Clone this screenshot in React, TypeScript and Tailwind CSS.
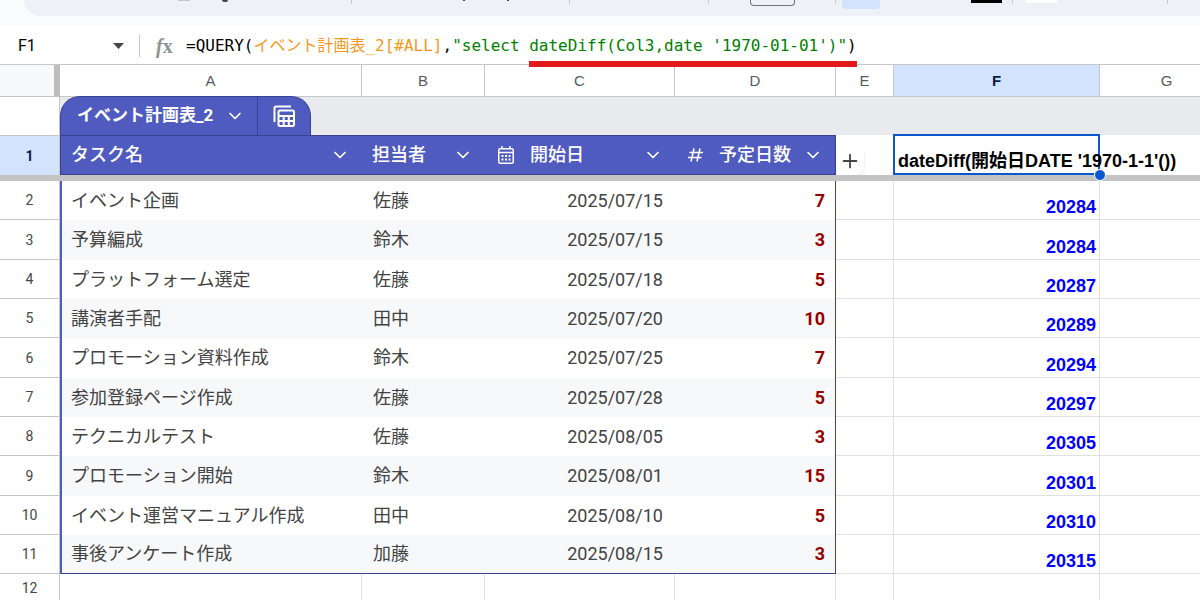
import { ChevronDown, Plus } from "lucide-react";

const tasks = [
  { name: "イベント企画", owner: "佐藤", start: "2025/07/15", days: 7, diff: 20284 },
  { name: "予算編成", owner: "鈴木", start: "2025/07/15", days: 3, diff: 20284 },
  { name: "プラットフォーム選定", owner: "佐藤", start: "2025/07/18", days: 5, diff: 20287 },
  { name: "講演者手配", owner: "田中", start: "2025/07/20", days: 10, diff: 20289 },
  { name: "プロモーション資料作成", owner: "鈴木", start: "2025/07/25", days: 7, diff: 20294 },
  { name: "参加登録ページ作成", owner: "佐藤", start: "2025/07/28", days: 5, diff: 20297 },
  { name: "テクニカルテスト", owner: "佐藤", start: "2025/08/05", days: 3, diff: 20305 },
  { name: "プロモーション開始", owner: "鈴木", start: "2025/08/01", days: 15, diff: 20301 },
  { name: "イベント運営マニュアル作成", owner: "田中", start: "2025/08/10", days: 5, diff: 20310 },
  { name: "事後アンケート作成", owner: "加藤", start: "2025/08/15", days: 3, diff: 20315 },
];

const columns = ["A", "B", "C", "D", "E", "F", "G"];

const grid = "border-r border-b border-[#e1e1e1]";
const rowHead =
  "border-r border-b border-[#c7c7c7] p-0 text-center font-['Roboto'] text-sm font-normal text-[#444746]";
const tableHead =
  "border-y border-[#3a4294] bg-[#505bbf] p-0 text-left font-medium whitespace-nowrap text-white";

function Divider() {
  return <div className="h-1 w-px shrink-0 bg-[#c4c7c5]" />;
}

function Toolbar() {
  return (
    <div className="bg-[#f9fbfd] pb-[10px]">
      <div className="ml-6 flex h-4 items-start overflow-hidden rounded-bl-3xl bg-[#eef2f8]">
        <div className="ml-[154px] h-px w-3 shrink-0 bg-[#c4c7c5]" />
        <div className="ml-8 h-[2px] w-[6px] shrink-0 rounded-b-sm bg-[#444746]" />
        <div className="w-[123px] shrink-0" />
        <Divider />
        <div className="ml-[111px] h-px w-[2px] shrink-0 bg-[#444746]" />
        <div className="ml-[42px] h-px w-[2px] shrink-0 bg-[#444746]" />
        <div className="w-[60px] shrink-0" />
        <Divider />
        <div className="w-[138px] shrink-0" />
        <Divider />
        <div className="ml-[41px] h-[6px] w-[45px] shrink-0 rounded-b border-x border-b border-[#747775]" />
        <div className="w-10 shrink-0" />
        <Divider />
        <div className="ml-[6px] h-[9px] w-[38px] shrink-0 rounded-b bg-[#d3e3fd]" />
        <div className="ml-[91px] h-[3px] w-[31px] shrink-0 bg-black" />
        <div className="w-[10px] shrink-0" />
        <Divider />
        <div className="ml-3 h-[3px] w-8 shrink-0 bg-white" />
        <div className="w-[110px] shrink-0" />
        <Divider />
      </div>
    </div>
  );
}

function FormulaBar() {
  return (
    <div className="flex h-[39px] items-center border-b border-[#c7c7c7] bg-white pt-0.5">
      <input
        aria-label="Name box"
        defaultValue="F1"
        className="w-[109px] pl-[18px] font-['Roboto'] text-base text-black outline-none"
      />
      <button aria-label="Named ranges" className="flex w-[30px] items-center pl-1">
        <svg width="11" height="6" viewBox="0 0 11 6" fill="#444746">
          <path d="M0 0h11L5.500 6z" />
        </svg>
      </button>
      <div className="h-[22px] w-px bg-[#c7c7c7]" />
      <span className="w-[46px] pl-4 font-['Liberation_Serif'] text-xl leading-6 font-bold text-[#8f9293]">
        <i>f</i>x
      </span>
      <div
        role="textbox"
        aria-label="Formula"
        className="font-['DejaVu_Sans_Mono','Noto_Sans_CJK_JP',monospace] text-base leading-6 whitespace-pre text-black"
      >
        =QUERY(<span className="text-[#f7981d]">イベント計画表_2[#ALL]</span>,
        <span className="text-[#008000]">"select </span>
        <span className="relative">
          <span className="text-[#008000]">dateDiff(Col3,date '1970-01-01')"</span>)
          <span className="absolute inset-x-0 top-full mt-1.5 h-[6px] bg-[#e31b1b]" />
        </span>
      </div>
    </div>
  );
}

function TableTab() {
  return (
    <div className="relative -mt-px flex h-[39px] w-[251px] rounded-t-[20px] border-x border-t border-[#3a4294] bg-[#505bbf] text-white">
      <button className="flex flex-1 items-center justify-between pr-3 pl-4 text-[17px] font-bold">
        イベント計画表_2
        <ChevronDown size={20} />
      </button>
      <button aria-label="Table views" className="flex w-[53px] items-center justify-center border-l border-[#3a4294]">
        <svg width="22" height="22" viewBox="0 0 22 22" fill="none" stroke="currentColor" strokeWidth="2">
          <path d="M1.500 17V3a1.500 1.500 0 0 1 1.500-1.500h15" />
          <rect x="5.500" y="5.500" width="15.500" height="15.500" rx="1.500" />
          <path d="M5.500 11h15.500M5.500 16h15.500M10.700 11v10M15.800 11v10" />
        </svg>
      </button>
    </div>
  );
}

function CalendarIcon() {
  return (
    <svg width="16" height="18" viewBox="0 0 16 18" className="shrink-0">
      <rect x="0.750" y="2.750" width="14.500" height="14.500" rx="1.500" fill="none" stroke="currentColor" strokeWidth="1.500" />
      <path d="M4 0v3M12 0v3M1 6.500h14" stroke="currentColor" strokeWidth="1.500" />
      <path d="M3.500 10h2M7 10h2M10.500 10h2M3.500 13.500h2M7 13.500h2M10.500 13.500h2" stroke="currentColor" strokeWidth="2" />
    </svg>
  );
}

function NumberIcon() {
  return (
    <svg width="15" height="14" viewBox="0 0 15 14" fill="none" stroke="currentColor" strokeWidth="1.600" className="shrink-0">
      <path d="M1.500 4.500H15M0 9.500h13.500M6 0.500 3 13.500M12 0.500 9 13.500" />
    </svg>
  );
}

function MenuButton({ label }: { label: string }) {
  return (
    <button aria-label={label} className="ml-auto">
      <ChevronDown size={20} />
    </button>
  );
}

export default function App() {
  return (
    <div className="h-screen overflow-hidden bg-white font-['Roboto','Noto_Sans_CJK_JP',sans-serif]">
      <Toolbar />
      <FormulaBar />
      <table className="w-full min-w-[1234px] table-fixed border-separate border-spacing-0">
        <colgroup>
          <col className="w-[60px]" />
          <col className="w-[302px]" />
          <col className="w-[123px]" />
          <col className="w-[190px]" />
          <col className="w-[161px]" />
          <col className="w-[58px]" />
          <col className="w-[206px]" />
          <col />
        </colgroup>
        <thead>
          <tr className="h-8">
            <th className="border-r-[6px] border-b border-r-[#bdbdbd] border-b-[#c7c7c7] bg-[#f8f9fa] p-0" />
            {columns.map((col) => (
              <th
                key={col}
                className={`border-r border-b border-[#c7c7c7] p-0 font-['Liberation_Sans'] text-[15px] leading-5 ${
                  col === "F" ? "bg-[#d3e3fd] font-bold text-[#041e49]" : "font-normal text-[#575b5f]"
                }`}
              >
                {col}
              </th>
            ))}
          </tr>
          <tr className="h-[38px]">
            <td className="border-r border-[#c7c7c7] p-0" />
            <td colSpan={7} className="bg-[#e8eaed] p-0 align-top">
              <TableTab />
            </td>
          </tr>
          <tr className="h-10 text-lg leading-6">
            <th className="border-t border-r border-[#c7c7c7] bg-[#d3e3fd] p-0 font-['Roboto'] text-sm font-bold text-[#041e49]">
              1
            </th>
            <th className={`${tableHead} border-l`}>
              <div className="flex items-center pr-3 pl-[10px]">
                タスク名
                <MenuButton label="タスク名 menu" />
              </div>
            </th>
            <th className={tableHead}>
              <div className="flex items-center pr-3 pl-[10px]">
                担当者
                <MenuButton label="担当者 menu" />
              </div>
            </th>
            <th className={tableHead}>
              <div className="flex items-center gap-4 pr-3 pl-[13px]">
                <CalendarIcon />
                開始日
                <MenuButton label="開始日 menu" />
              </div>
            </th>
            <th className={`${tableHead} border-r`}>
              <div className="flex items-center pr-3 pl-[13px]">
                <NumberIcon />
                <span className="ml-4">予定日数</span>
                <MenuButton label="予定日数 menu" />
              </div>
            </th>
            <td className="p-0 align-bottom">
              <button
                aria-label="Add column"
                className="flex h-7 w-7 items-center justify-center rounded-r-lg bg-white text-[#444746] shadow"
              >
                <Plus size={22} />
              </button>
            </td>
            <td className="relative p-0 pb-0.5 align-bottom font-['Liberation_Sans','Noto_Sans_CJK_JP',sans-serif] font-bold whitespace-nowrap text-black">
              <div className="absolute -top-px right-0 bottom-0 -left-px border-2 border-[#0b57d0]" />
              <div className="relative w-0 pl-1">dateDiff(開始日DATE '1970-1-1'())</div>
              <div className="absolute -right-[6px] -bottom-[6px] z-10 h-3 w-3 rounded-full border border-white bg-[#0b57d0]" />
            </td>
            <td className="p-0" />
          </tr>
          <tr className="h-[6px]">
            <td colSpan={8} className="bg-[#c4c4c4] p-0" />
          </tr>
        </thead>
        <tbody className="text-lg leading-6 text-[#434343]">
          {tasks.map((task, i) => {
            const band = `p-0 ${i % 2 ? "bg-[#f6f8f9]" : "bg-white"} ${
              i === tasks.length - 1 ? "border-b border-b-[#3a4294]" : ""
            }`;
            return (
              <tr key={task.name} className="h-[39px] nth-[3n+2]:h-10">
                <th className={rowHead}>{i + 2}</th>
                <td className={`${band} border-l-2 border-l-[#505bbf] pl-[9px]`}>{task.name}</td>
                <td className={`${band} pl-[11px]`}>{task.owner}</td>
                <td className={`${band} pr-3 text-right`}>{task.start}</td>
                <td className={`${band} border-r border-r-[#3a4294] pr-[10px] text-right font-bold text-[#990000]`}>
                  {task.days}
                </td>
                <td className={`${grid} p-0`} />
                <td
                  className={`${grid} p-0 pr-[3px] text-right align-bottom font-['Liberation_Sans'] font-bold text-[#0000ff]`}
                >
                  {task.diff}
                </td>
                <td className={`${grid} p-0`} />
              </tr>
            );
          })}
          <tr className="h-7">
            <th className={rowHead}>12</th>
            {columns.map((col) => (
              <td key={col} className={`${grid} p-0`} />
            ))}
          </tr>
        </tbody>
      </table>
    </div>
  );
}
